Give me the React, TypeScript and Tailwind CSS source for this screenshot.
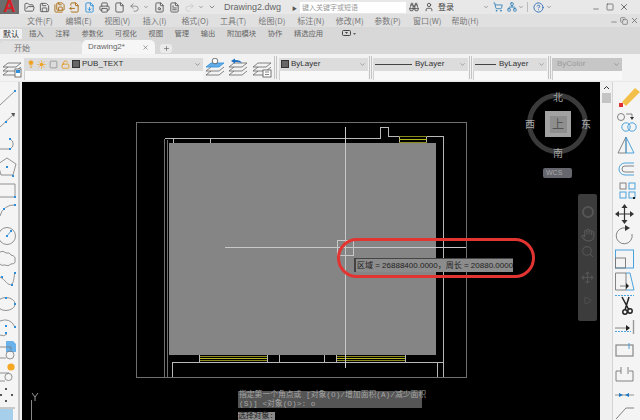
import React from "react";
import { FolderOpen, Save, Printer, Undo2, Redo2, Binoculars, User, ShoppingCart, X, Minus, Square, ChevronDown, Plus, Lightbulb, Sun, LockOpen, Hand, Move, Search, FileText, FileSearch, Copy, Play, File, CircleHelp, Network, SaveAll, FileDown, FileOutput } from "lucide-react";

const F = { fontFamily: '"Noto Sans CJK SC","Liberation Sans",sans-serif' };
const L = { fontFamily: '"Liberation Sans","Noto Sans CJK SC",sans-serif' };
const M = { fontFamily: '"Liberation Mono","Noto Sans CJK SC",monospace' };

function LayerStack({ kind }: { kind: "plain" | "match" | "prev" | "state" }) {
  const top = kind === "match" ? "#62ace8" : "none";
  const topS = kind === "match" ? "#2f8fd8" : "#666";
  return (
    <svg width="20" height="20" viewBox="0 0 20 20" fill="none" stroke="#666" strokeWidth="0.8" className="shrink-0">
      <path d="M1 9 L6 5 L19 5 L14 9 Z" fill={top} stroke={topS} />
      <path d="M1 13 L6 9 M14 13 L19 9 M1 13 L14 13" />
      <path d="M1 17 L6 13 M14 17 L19 13 M1 17 L14 17" />
      {kind === "plain" && <><rect x="13" y="11" width="6" height="8" fill="#fff" stroke="#555" /><rect x="14" y="12" width="4" height="3" fill="#2f8fd8" stroke="none" /></>}
      {kind === "match" && <circle cx="10" cy="3" r="2.8" stroke="#555" fill="#fff" />}
      {kind === "prev" && <path d="M3 3 L7 0.5 L7 2 C11 2 13 3 14 5 C12 4 10 4 7 4 L7 5.5 Z" fill="#1e6fc0" stroke="none" />}
      {kind === "state" && <><rect x="11" y="12" width="8" height="7" fill="#fff" stroke="#555" /><path d="M13 14 L17 14 M13 16.5 L17 16.5" /></>}
    </svg>
  );
}

function Combo({ w, children, dim = false }: { w: string; children: React.ReactNode; dim?: boolean }) {
  return (
    <div style={L} className={`${w} flex flex-col h-[22px] shrink-0 mt-[2px]`}>
      <div className={`h-[13px] flex items-center px-[2px] text-[8px] ${dim ? "bg-[#c6c6c6] text-[#9a9a9a]" : "bg-[#dcdcdc] text-[#333]"}`}>
        {children}
        <ChevronDown size={7} className="ml-auto text-[#777]" />
      </div>
      <div className="h-[9px] bg-[#f8f8f8] border-l border-[#cfcfcf]" />
    </div>
  );
}

function Sep() {
  return <div className="w-[3px] h-[23px] mx-[1px] border-x border-[#c4c4c4] shrink-0" />;
}

const menus = ["文件(F)", "编辑(E)", "视图(V)", "插入(I)", "格式(O)", "工具(T)", "绘图(D)", "标注(N)", "修改(M)", "参数(P)", "窗口(W)", "帮助(H)"];
const tabs = ["插入", "注释", "参数化", "可视化", "视图", "管理", "输出", "附加模块", "协作", "精选应用"];

function LeftTools() {
  const d = "#7a7a7a";
  const b = "#2d8fdc";
  return (
    <svg width="18" height="338" viewBox="0 82 18 338" fill="none" stroke={d} strokeWidth="0.8">
      <path d="M0 105 L15 91" />
      <rect x="14" y="90" width="2" height="2" fill={b} stroke="none" />
      <path d="M0 127 L14 114" />
      <path d="M11 113 L15 113 L14 117 Z" fill="#555" stroke="none" />
      <rect x="5" y="121" width="2" height="2" fill={b} stroke="none" />
      <path d="M0 149 L10 149 A 5.5 5.5 0 0 0 10 139" />
      <rect x="9" y="138" width="2" height="2" fill={b} stroke="none" />
      <rect x="9" y="148" width="2" height="2" fill={b} stroke="none" />
      <path d="M7 158 L16 164 L13 175 L1 175 L-2 164 Z" />
      <rect x="6" y="166" width="2" height="2" fill={b} stroke="none" />
      <rect x="12" y="175" width="2" height="2" fill={b} stroke="none" />
      <path d="M0 184 L15 184 L15 197 L0 197" />
      <rect x="14" y="196" width="2" height="2" fill={b} stroke="none" />
      <path d="M0 216 A 14 14 0 0 1 15 205" />
      <rect x="3" y="208" width="2" height="2" fill={b} stroke="none" />
      <rect x="14" y="204" width="2" height="2" fill={b} stroke="none" />
      <circle cx="7" cy="236" r="8.5" />
      <path d="M7 236 L11 231" stroke={b} />
      <rect x="6" y="235" width="2" height="2" fill={b} stroke="none" />
      <rect x="10" y="230" width="2" height="2" fill={b} stroke="none" />
      <path d="M0 252 Q3 250 6 253 Q10 252 11 255 Q16 256 15 260 Q16 264 11 264 Q8 267 5 265 Q1 266 0 264" />
      <path d="M0 277 C5 279 8 287 12 284 C14 282 14 276 15 272" />
      <rect x="1" y="276" width="2" height="2" fill={b} stroke="none" />
      <rect x="11" y="284" width="2" height="2" fill={b} stroke="none" />
      <rect x="14" y="272" width="2" height="2" fill={b} stroke="none" />
      <ellipse cx="6" cy="304" rx="9" ry="6.5" />
      <rect x="5" y="297" width="2" height="2" fill={b} stroke="none" />
      <rect x="14" y="303" width="2" height="2" fill={b} stroke="none" />
      <path d="M0 321 Q10 317 15 327" />
      <path d="M0 335 Q4 337 7 334" />
      <rect x="5" y="325" width="2" height="2" fill={b} stroke="none" />
      <rect x="14" y="326" width="2" height="2" fill={b} stroke="none" />
      <rect x="5" y="332" width="2" height="2" fill={b} stroke="none" />
      <path d="M6 341 L13 341 L16 344 L16 352 L6 352 Z" fill="#6cb2ea" stroke="none" />
      <path d="M0 347 L11 347 M0 358 L6 358 M11 347 L11 350" />
      <circle cx="10" cy="355" r="4" />
      <circle cx="11" cy="367" r="3.6" fill="#f5a623" stroke="none" />
      <path d="M0 373 L9 373 M0 381 L5 381" />
      <circle cx="8.5" cy="377" r="3.6" />
      <g fill="#555" stroke="none">
        <rect x="5" y="388" width="2" height="2" />
        <rect x="0" y="394" width="2" height="2" />
        <rect x="11" y="394" width="2" height="2" />
        <rect x="5" y="400" width="2" height="2" />
      </g>
      <path d="M0 408 L15 408" stroke="#888" />
      <rect x="0" y="409" width="13" height="11" fill="#a5cfea" stroke="none" />
    </svg>
  );
}

function RightTools() {
  const s = "#777";
  const b = "#3a9ad9";
  return (
    <svg width="27" height="338" viewBox="613 82 27 338" fill="none" stroke={s} strokeWidth="0.9">
      <path d="M622 102 L635 88 L640 92 L626 106 Z" fill="#f2c04a" stroke="none" />
      <rect x="619" y="103" width="4" height="4" fill="#e03030" stroke="none" />
      <circle cx="621" cy="117" r="3.5" />
      <path d="M626 114 L632 114 L632 118" />
      <path d="M630 117 L634 117 L632 120 Z" fill="#333" stroke="none" />
      <circle cx="626" cy="127" r="4.2" stroke={b} />
      <circle cx="632" cy="127" r="4.2" stroke={b} />
      <path d="M624 137 L624 153 L616 153 Z" transform="translate(2 0)" />
      <path d="M626 137 L634 153 L626 153 Z" stroke={b} />
      <path d="M634 163 L625 163 A 6 6 0 0 0 625 175 L634 175" stroke={b} />
      <path d="M634 166 L625 166 A 3 3 0 0 0 625 172 L634 172" />
      <rect x="620" y="183" width="6" height="6" />
      <rect x="629" y="183" width="6" height="6" stroke={b} />
      <rect x="620" y="192" width="6" height="6" stroke={b} />
      <rect x="629" y="192" width="6" height="6" stroke={b} />
      <path d="M633 197 h2 v2 h-2 z" fill="#222" stroke="none" />
      <g fill="#333" stroke="#333" strokeWidth="1.2">
        <path d="M624.5 207 L624.5 221 M617 214 L632 214" />
        <path d="M624.5 204 L621.5 208 L627.5 208 Z M624.5 224 L621.5 220 L627.5 220 Z M615 214 L619 211 L619 217 Z M634 214 L630 211 L630 217 Z" stroke="none" />
      </g>
      <path d="M626 228 A 8 8 0 1 0 632 234" />
      <path d="M625 225 L630 228 L625 231 Z" fill="#333" stroke="none" />
      <rect x="615.5" y="250" width="18" height="18" stroke={b} />
      <rect x="615.5" y="258" width="10" height="10" />
      <path d="M615.5 273 L626 273 L626 290 L615.5 290 Z" />
      <path d="M626 273 L630 273 L634 290 L626 290" stroke={b} />
      <path d="M620 286 L628 286" />
      <path d="M626 283 L629 286 L626 289 Z" fill="#222" stroke="none" />
      <path d="M615 295.5 L634 295.5" stroke={b} strokeDasharray="2 1" />
      <g stroke="#222" strokeWidth="1.5">
        <path d="M622 297 L629 310 M629 297 L625 310" />
        <circle cx="625" cy="312" r="2.2" fill="none" />
        <circle cx="630" cy="311" r="2.2" fill="none" />
      </g>
      <path d="M615 328 L629 328" />
      <path d="M626 325 L630 328 L626 331 Z" fill="#222" stroke="none" />
      <path d="M615 331.5 L631 331.5" stroke={b} strokeDasharray="2 1" />
      <path d="M633.5 320 L633.5 334" stroke="#999" strokeWidth="1.4" />
      <rect x="616" y="345" width="17" height="11" strokeWidth="1.2" stroke="#888" />
      <path d="M629 343 L629 349" stroke={b} />
      <path d="M616 371 L616 381 L633 381 L633 371 L629 371 M621 371 L616 371" />
      <path d="M621 367 L621 374 M628 367 L628 374" />
      <path d="M615 395 L634 395" stroke="#888" />
      <path d="M619 393 L623 395 L619 397 Z M629 393 L625 395 L629 397 Z" fill="#1b78c8" stroke="none" />
      <path d="M616 419 L626 408 L634 408" />
    </svg>
  );
}

function Drawing() {
  const w = "#b8b8b8";
  const g = "#6f6f6f";
  const y = "#8a8a1e";
  return (
    <svg width="578" height="338" viewBox="22 82 578 338" className="block" fill="none" shapeRendering="crispEdges">
      <rect x="136.5" y="122.5" width="330" height="255" stroke={g} />
      <rect x="169" y="143" width="267" height="212" fill="#858585" />
      <path d="M164.5 377 L164.5 138.5 M167.5 377 L167.5 140" stroke={g} />
      <path d="M164.5 138.5 L380.5 138.5 L380.5 127.5 L388.5 127.5 L388.5 136.5 L443.5 136.5 L443.5 377" stroke={w} />
      <path d="M173.5 138 L173.5 143 M210.5 138 L210.5 143 M399.5 136 L399.5 143 M426.5 136 L426.5 143" stroke={w} />
      <path d="M399 136.5 L427 136.5 M399 142.5 L427 142.5" stroke={y} />
      <path d="M399 139.5 L427 139.5" stroke="#b5b520" />
      <path d="M172.5 377 L172.5 362.5 L443 362.5 M437.5 363 L437.5 377" stroke={w} />
      <path d="M199 356.5 L267 356.5 M199 360.5 L267 360.5 M337 356.5 L405 356.5 M337 360.5 L405 360.5" stroke={y} />
      <path d="M199 358.5 L267 358.5 M337 358.5 L405 358.5" stroke="#b5b520" />
      <path d="M199.5 355 L199.5 362 M267.5 355 L267.5 362 M279.5 355 L279.5 362 M324.5 355 L324.5 362 M336.5 355 L336.5 362 M405.5 355 L405.5 362" stroke={w} />
      <path d="M345.5 127 L345.5 368 M225 247.5 L466 247.5" stroke="#c8c8c8" />
      <rect x="337.5" y="240.5" width="16" height="15" stroke="#c8c8c8" />
      <path d="M31 400 L31 420" stroke="#888" />
      <path d="M32 393 L35 397 L35 401 M38 393 L35 397" stroke="#999" shapeRendering="geometricPrecision" />
      <rect x="338.5" y="239.5" width="195" height="37" rx="18.5" stroke="#e23430" strokeWidth="3" shapeRendering="geometricPrecision" />
    </svg>
  );
}

export default function App() {
  const i = "shrink-0";
  return (
    <div style={F} className="w-[640px] h-[420px] overflow-hidden flex flex-col bg-[#f0f0f0] text-[#555]">
      <div className="h-[14px] shrink-0 flex items-center bg-[#e8e8e8] whitespace-nowrap">
        <div className="w-[19px] h-[14px] bg-[#6d6d6d] flex items-center justify-center shrink-0">
          <span style={L} className="text-[#d81e25] text-[17px] leading-[14px] font-bold">A</span>
        </div>
        <div className="flex items-center w-[186px] pl-[5px] gap-[3px] shrink-0 text-[#5a5a5a]">
          <FolderOpen size={11} className={i} />
          <Save size={11} className={`${i} ml-[1px]`} />
          <SaveAll size={11} className={`${i} ml-[1px] text-[#a86a10]`} />
          <FileOutput size={11} className={`${i} ml-[1px] text-[#a86a10]`} />
          <FileDown size={11} className={`${i} ml-[1px] text-[#2f8fd8]`} />
          <Printer size={11} className={`${i} ml-[1px]`} />
          <File size={11} className={`${i} ml-[1px]`} />
          <Undo2 size={11} className={`${i} ml-[1px] text-[#888]`} />
          <ChevronDown size={6} className={i} />
          <FileSearch size={11} className={`${i} ml-[2px]`} />
          <FileText size={11} className={`${i} ml-[1px]`} />
          <Redo2 size={11} className={`${i} ml-[1px] text-[#ccc]`} />
          <ChevronDown size={6} className={i} />
          <ChevronDown size={8} className={`${i} ml-[1px]`} />
        </div>
        <span style={L} className="ml-[19px] text-[9px] text-[#666] leading-none">Drawing2.dwg</span>
        <span className="ml-[11px] text-[5px] leading-none">▶</span>
        <div className="ml-[3px] w-[106px] h-[11px] shrink-0 bg-white text-[7px] leading-[11px] px-[2px] text-[#999]">键入关键字或短语</div>
        <Binoculars size={10} className="ml-[3px] shrink-0 text-[#444]" />
        <User size={10} className="ml-[5px] shrink-0 text-[#444]" />
        <span className="text-[8px] leading-none ml-[4px] text-[#444]">登录</span>
        <ChevronDown size={6} className="ml-[29px] shrink-0" />
        <ShoppingCart size={10} className="ml-[4px] shrink-0 text-[#2f7fb8]" />
        <Network size={10} className="ml-[4px] shrink-0 text-[#2f7fb8]" />
        <ChevronDown size={6} className="ml-[1px] shrink-0" />
        <div className="ml-[3px] w-px h-[10px] bg-[#bbb] shrink-0" />
        <CircleHelp size={11} className="ml-[5px] shrink-0 text-[#2f6fb8]" />
        <ChevronDown size={6} className="ml-[2px] shrink-0" />
        <Minus size={8} className="ml-[40px] mt-[4px] shrink-0" />
        <Square size={8} className="ml-[6px] shrink-0" />
        <X size={10} className="ml-[5px] shrink-0" />
      </div>

      <div className="h-[13px] shrink-0 flex items-center pl-[27px] text-[8px] leading-none text-[#777] bg-[#e0e0e0]">
        {menus.map((m) => (
          <span key={m} className="w-[38.6px] shrink-0 whitespace-nowrap">{m}</span>
        ))}
        <div className="ml-auto flex items-center gap-[2px] pr-[1px] text-[#666]">
          <Minus size={8} className="mt-[3px]" />
          <Copy size={8} />
          <X size={9} />
        </div>
      </div>

      <div className="h-[13px] shrink-0 flex items-center text-[7.3px] leading-none text-[#666] bg-[#d8d8d8] whitespace-nowrap">
        <span className="bg-[#f0f0f0] w-[22px] h-[10px] text-[8px] leading-[10px] text-center text-[#333] shrink-0">默认</span>
        <div className="flex items-center pl-[7px] gap-[11.6px]">
          {tabs.map((t) => (
            <span key={t}>{t}</span>
          ))}
        </div>
        <svg width="16" height="7" viewBox="0 0 16 7" className="ml-[19px] shrink-0" fill="none" stroke="#444">
          <rect x="0.5" y="0.5" width="8" height="5" rx="1" />
          <path d="M3 2 L6 2 L4.5 4 Z" fill="#444" stroke="none" />
          <path d="M11 3 L14 3 L12.5 5 Z" fill="#666" stroke="none" />
        </svg>
      </div>

      <div className="h-[14px] shrink-0 flex items-end text-[8px] leading-none bg-[#d8d8d8]">
        <div className="w-[82px] h-[13px] flex items-center pl-[14px] text-[#777] bg-[#e2e2e2] rounded-t-[4px] shrink-0">开始</div>
        <div style={L} className="w-[73px] h-[14px] flex items-center pl-[6px] bg-[#f6f6f6] rounded-t-[5px] text-[#666] shrink-0">
          Drawing2*
          <X size={7} className="ml-[17px]" />
        </div>
        <div className="ml-[5px] mb-[1px] w-[12px] h-[9px] rounded-[3px] bg-[#eaeaea] flex items-center justify-center shrink-0">
          <Plus size={7} />
        </div>
      </div>

      <div className="h-[27px] shrink-0 flex items-center bg-[#f2f2f2] pl-[2px]">
        <LayerStack kind="plain" />
        <div className="ml-[2px] w-[179px] h-[22px] mt-[2px] flex flex-col shrink-0">
          <div style={L} className="h-[13px] bg-[#dcdcdc] flex items-center pl-[3px] pr-[2px] text-[9px] text-[#333]">
            <Lightbulb size={8} className="shrink-0 text-[#f0a020] fill-[#f0a020]" />
            <Sun size={9} className="ml-[2px] shrink-0 text-[#f0a020] fill-[#f0a020]" />
            <Square size={9} className="ml-[3px] shrink-0 text-[#888]" strokeDasharray="3 2" />
            <LockOpen size={9} className="ml-[3px] shrink-0 text-[#e8920f]" />
            <span className="ml-[2px] w-[8px] h-[8px] bg-[#666] border border-[#333] shrink-0" />
            <span className="ml-[2px] whitespace-nowrap text-[8px]">PUB_TEXT</span>
            <ChevronDown size={7} className="ml-auto text-[#666]" />
          </div>
          <div className="h-[9px] bg-[#f8f8f8] border-l border-[#cfcfcf]" />
        </div>
        <div className="ml-[2px]"><LayerStack kind="match" /></div>
        <div className="ml-[3px]"><LayerStack kind="prev" /></div>
        <div className="ml-[4px]"><LayerStack kind="state" /></div>
        <div className="ml-[1px]"><Sep /></div>
        <div className="ml-[1px]">
          <Combo w="w-[89px]">
            <span className="w-[8px] h-[8px] bg-[#666] border border-[#333] mr-[2px] shrink-0" />
            ByLayer
          </Combo>
        </div>
        <Sep />
        <Combo w="w-[95px]">
          <span className="w-[37px] h-px bg-[#444] mr-[3px] shrink-0" />
          ByLayer
        </Combo>
        <Sep />
        <Combo w="w-[74px]">
          <span className="w-[21px] h-px bg-[#444] mr-[3px] shrink-0" />
          ByLayer
        </Combo>
        <Sep />
        <Combo w="w-[70px]" dim>
          <span className="ml-[3px]">ByColor</span>
        </Combo>
      </div>

      <div className="h-px shrink-0 bg-[#e8e8e8]" />

      <div className="flex-1 flex min-h-0">
        <div className="w-[18px] shrink-0 bg-[#f4f4f4] overflow-hidden"><LeftTools /></div>
        <div className="w-[2px] shrink-0 bg-[#c9c9c9]" />
        <div className="w-[2px] shrink-0 bg-[#f0f0f0]" />
        <div className="relative w-[578px] shrink-0 bg-black overflow-hidden">
          <Drawing />
          <div className="absolute left-[505px] top-[11px] w-[61px] h-[61px] rounded-full border-[5px] border-[#3a3a3a]" />
          <div className="absolute left-[523px] top-[29px] w-[26px] h-[26px] bg-[#a2a2a2] flex items-center justify-center">
            <span className="w-[17px] h-[17px] bg-[#8e8e8e] flex items-center justify-center text-[12px] leading-none text-[#555]">上</span>
          </div>
          <span className="absolute left-[531px] top-[10px] text-[10px] leading-none text-[#a8a8a8]">北</span>
          <span className="absolute left-[503px] top-[37px] text-[10px] leading-none text-[#a8a8a8]">西</span>
          <span className="absolute left-[559px] top-[37px] text-[10px] leading-none text-[#a8a8a8]">东</span>
          <span className="absolute left-[531px] top-[66px] text-[10px] leading-none text-[#a8a8a8]">南</span>
          <div style={L} className="absolute left-[521px] top-[86px] w-[29px] h-[10px] rounded-[2px] bg-[#66666e] text-[7px] leading-[10px] pl-[3px] text-[#aaa]">WCS</div>
          <div className="absolute left-[556px] top-[112px] w-[19px] h-[127px] bg-[#3c3c3c] rounded-[2px] flex flex-col items-center pt-[12px] text-[#555]">
            <span className="w-[12px] h-[12px] rounded-full border-2 border-[#555] shrink-0" />
            <Hand size={14} className="mt-[10px] shrink-0" />
            <Search size={13} className="mt-[3px] shrink-0" />
            <Move size={13} className="mt-[13px] shrink-0" />
            <Play size={9} className="mt-[12px] shrink-0" />
          </div>
          <div style={L} className="absolute left-[332px] top-[176px] w-[159px] h-[14px] bg-[#8c8c8c] border-l-2 border-t border-[#444] text-[8px] leading-[13px] pl-[1px] text-[#222] whitespace-nowrap">
            区域 = 26888400.0000，周长 = 20880.0000
          </div>
          <div style={M} className="absolute left-[216px] top-[309px] w-[184px] h-[17px] bg-[#555] text-[7.8px] leading-[8.5px] px-[1px] text-[#a5a5a5]">
            <div className="whitespace-nowrap">指定第一个角点或 [对象(O)/增加面积(A)/减少面积</div>
            <div className="whitespace-nowrap">(S)] &lt;对象(O)&gt;: o</div>
          </div>
          <div style={M} className="absolute left-[216px] top-[330px] w-[37px] h-[8px] bg-[#8c8c8c] text-[7.8px] leading-[8px] text-[#222] whitespace-nowrap">选择对象:</div>
        </div>
        <div className="w-[12px] shrink-0 bg-[#f0f0f0] flex flex-col items-center">
          <svg width="7" height="5" viewBox="0 0 7 5" fill="none" stroke="#333" className="mt-[3px]"><path d="M1 4 L3.5 1.5 L6 4" /></svg>
          <div className="w-[9px] h-[10px] mt-[3px] bg-[#c4c4c4]" />
        </div>
        <div className="w-[28px] shrink-0 bg-[#f4f4f4] border-l border-[#d4d4d4] overflow-hidden"><RightTools /></div>
      </div>
    </div>
  );
}
